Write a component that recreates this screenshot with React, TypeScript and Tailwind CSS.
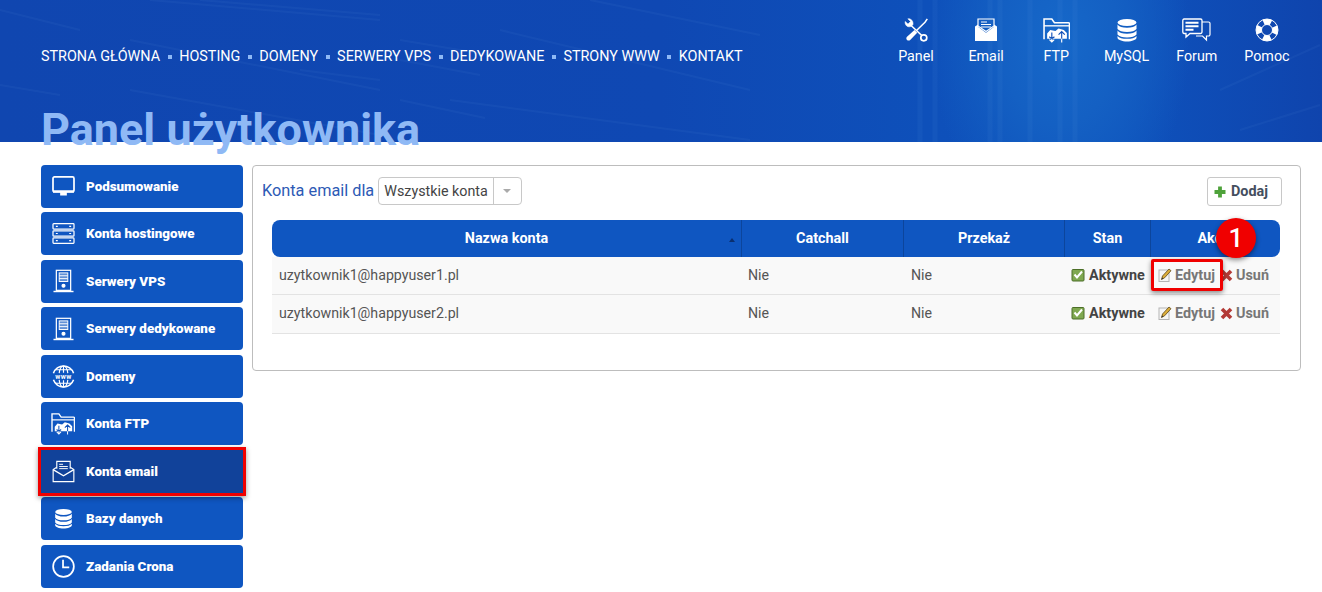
import type { ReactNode } from "react";

const ROBOTO = "font-['Roboto','Liberation_Sans',sans-serif]";

type IconProps = { className?: string };

// ikony rysowane recznie
const ToolsIcon = ({ className }: IconProps) => (
  <svg viewBox="0 0 24 24" className={className} fill="none" stroke="currentColor">
    <path d="M6 6.500l11.800 11" strokeWidth="1.500" />
    <circle cx="19.800" cy="19.800" r="3" strokeWidth="1.700" />
    <path d="M3.800.8l2.700 2.700L4 6 1.200 3.400C.6 6 2.500 9 5.500 8.800l2-.5L9 6.500C9.500 3 7 .3 3.800.8z" fill="currentColor" stroke="currentColor" strokeWidth=".5" />
    <path d="M23.300.8l-2.300 3.400-8.500 8.300" strokeWidth="1.500" />
    <path d="M10.500 12l2.700 2.700-7 7.200c-.9.900-2.300.9-3.200 0s-.9-2.300 0-3.200z" fill="currentColor" stroke="none" />
  </svg>
);

const EmailFilledIcon = ({ className }: IconProps) => (
  <svg viewBox="0 0 24 24" className={className} fill="currentColor">
    <path d="M4 8V1h16v7l-8 5.500z" fill="none" stroke="currentColor" strokeWidth="1.200" />
    <path d="M7 4h6M7 6.500h10M7 9h10" stroke="currentColor" strokeWidth="1" />
    <path d="M1 8.500l3-2v2.200l8 6 8-6V6.500l3 2V23H1z" />
  </svg>
);

const EmailOutlineIcon = ({ className }: IconProps) => (
  <svg viewBox="0 0 24 24" className={className} fill="none" stroke="currentColor" strokeWidth="1.200">
    <path d="M5 9V1.500h14V9" />
    <path d="M7.500 4.500h4M7.500 6.800h9M7.500 9h9" strokeWidth="1" />
    <path d="M5 7.500L1.200 10v12.500h21.600V10L19 7.500" />
    <path d="M1.200 10L12 16.500 22.800 10" strokeWidth="1.400" />
  </svg>
);

const FtpIcon = ({ className }: IconProps) => (
  <svg viewBox="0 0 26 24" className={className} fill="none" stroke="currentColor">
    <path d="M1 20.500V1h7.500L11 4.500h13.500a1 1 0 0 1 1 1v15" strokeWidth="1.500" />
    <path d="M1 7.500h24.500" strokeWidth="1.300" />
    <path d="M4 20v-5l3-3.500 5 1 3-2.500 5 1.500 3 3V20z" fill="currentColor" stroke="none" />
    <g strokeWidth="1.100" stroke="#1050b8">
      <path d="M8.500 14v6M18 20v-7M15 16l3-3 3 3M6 18l2.500 2 2.500-2" />
    </g>
    <g strokeWidth="1.100" stroke="currentColor">
      <path d="M8.500 20v3M18 20v3.500M6.200 20.700l2.300 2.300 2.300-2.300" />
    </g>
  </svg>
);

const DatabaseIcon = ({ className }: IconProps) => (
  <svg viewBox="0 0 24 24" className={className} fill="currentColor">
    <ellipse cx="12" cy="4.500" rx="9.500" ry="3.500" />
    <path d="M2.500 6.500c1.500 2.200 5 3.200 9.500 3.200s8-1 9.500-3.200V11c-1.500 2-5 3-9.500 3s-8-1-9.500-3z" />
    <path d="M2.500 12.500c1.500 2.200 5 3.200 9.500 3.200s8-1 9.500-3.200V16.500c-1.500 2-5 3-9.500 3s-8-1-9.500-3z" />
    <path d="M2.500 18c1.500 2 5 2.800 9.500 2.800s8-.8 9.500-2.800v1.800c0 2-4.500 3.700-9.500 3.700s-9.500-1.700-9.500-3.700z" />
  </svg>
);

const ForumIcon = ({ className }: IconProps) => (
  <svg viewBox="0 0 29 24" className={className} fill="none" stroke="currentColor">
    <path d="M20 4h6.500a1.500 1.500 0 0 1 1.500 1.500v11a1.500 1.500 0 0 1-1.500 1.500h-2v4l-4-4H14" strokeWidth="1.200" />
    <path d="M2 1h16.500A1.500 1.500 0 0 1 20 2.500v11.500a1.500 1.500 0 0 1-1.500 1.500H8l-4 3.500v-3.500H2A1.500 1.500 0 0 1 .8 14V2.500A1.500 1.500 0 0 1 2 1z" strokeWidth="1.300" />
    <path d="M3.500 4.800h13M3.500 8.300h13M3.500 11.800h8" strokeWidth="2" />
  </svg>
);

const LifeRingIcon = ({ className }: IconProps) => (
  <svg viewBox="0 0 24 24" className={className} fill="none" stroke="currentColor">
    <circle cx="12" cy="12" r="8.200" strokeWidth="5.500" strokeDasharray="7.500 5.380" strokeDashoffset="3.700" />
    <circle cx="12" cy="12" r="11" strokeWidth="1" />
    <circle cx="12" cy="12" r="5.500" strokeWidth="1" />
  </svg>
);

const MonitorIcon = ({ className }: IconProps) => (
  <svg viewBox="0 0 24 22" className={className} fill="none" stroke="currentColor">
    <rect x="1" y="1" width="22" height="15.500" rx="1.500" strokeWidth="1.800" />
    <path d="M1 15h22v2.500H1zM8.500 17.500h7v3h-7z" fill="currentColor" stroke="none" />
  </svg>
);

const ServersIcon = ({ className }: IconProps) => (
  <svg viewBox="0 0 24 22" className={className} fill="none" stroke="currentColor" strokeWidth="1.300">
    <rect x="1" y=".7" width="22" height="5.600" rx=".8" />
    <rect x="1" y="8.200" width="22" height="5.600" rx=".8" />
    <rect x="1" y="15.700" width="22" height="5.600" rx=".8" />
    <path d="M4 3.500h2M18 3.500h2M4 11h2M18 11h2M4 18.500h2M18 18.500h2" strokeWidth="1.200" />
  </svg>
);

const TowerIcon = ({ className }: IconProps) => (
  <svg viewBox="0 0 22 24" className={className} fill="none" stroke="currentColor" strokeWidth="1.300">
    <rect x="3.500" y=".8" width="15" height="21" />
    <rect x="6.500" y="3.500" width="9" height="9" fill="currentColor" fillOpacity=".35" strokeWidth="1" />
    <path d="M6.500 6.500h9M6.500 9.500h9" strokeWidth="1" />
    <circle cx="11" cy="17" r="1.500" fill="currentColor" />
    <path d="M.5 23h21" strokeWidth="1.500" />
  </svg>
);

const GlobeIcon = ({ className }: IconProps) => (
  <svg viewBox="0 0 24 24" className={className} fill="none" stroke="currentColor" strokeWidth="1.600">
    <path d="M1.500 8.500C3 4 7.500 1 12 1s9 3 10.500 7.500" />
    <path d="M1.500 15.500C3 20 7.500 23 12 23s9-3 10.500-7.500" />
    <path d="M7.500 8.500C8 4 10 1 12 1s4 3 4.500 7.500M7.500 15.500C8 20 10 23 12 23s4-3 4.500-7.500M3.500 5h17M3.500 19h17M12 1v7M12 16v7" strokeWidth="1.200" />
    <text x="12" y="14.600" textAnchor="middle" fontSize="7.200" fontWeight="700" letterSpacing=".5" fill="currentColor" stroke="none" fontFamily="Roboto, sans-serif">www</text>
  </svg>
);

const ClockIcon = ({ className }: IconProps) => (
  <svg viewBox="0 0 24 24" className={className} fill="none" stroke="currentColor" strokeWidth="1.800">
    <circle cx="12" cy="12" r="10.800" />
    <path d="M11.500 5v7.800h6.500" />
  </svg>
);

const CheckIcon = () => (
  <svg viewBox="0 0 14 14" className="w-[14px] h-[14px] shrink-0">
    <rect x="1" y="1.500" width="12" height="11.500" rx="1" fill="#7fa850" stroke="#4c6f28" />
    <path d="M3.500 6.500l2.500 3 5-6" fill="none" stroke="#fff" strokeWidth="2" />
  </svg>
);

const EditIcon = () => (
  <svg viewBox="0 0 14 14" className="w-[14px] h-[14px] shrink-0">
    <rect x="1" y="2" width="10" height="11.500" fill="#f6f6f6" stroke="#b5b5b5" />
    <path d="M3.500 11.500l1-3.500 6.500-7 2 1.700-6.300 7z" fill="#dcae3a" stroke="#5f4716" strokeWidth=".8" />
    <path d="M3.500 11.500l.6-2 1.400 1.100z" fill="#333" />
  </svg>
);

const CrossIcon = () => (
  <svg viewBox="0 0 13 13" className="w-[13px] h-[13px] shrink-0">
    <path d="M2 2l9 9M11 2l-9 9" stroke="#b33a36" strokeWidth="3.600" />
  </svg>
);

const PlusIcon = () => (
  <svg viewBox="0 0 12 12" className="w-[12px] h-[12px] shrink-0">
    <path d="M6 .5v11M.5 6h11" stroke="#4ea23a" strokeWidth="3.800" />
  </svg>
);

const navLinks = ["Strona główna", "Hosting", "Domeny", "Serwery VPS", "Dedykowane", "Strony WWW", "Kontakt"];

const quickLinks = [
  { label: "Panel", icon: <ToolsIcon className="w-[24px] h-[24px]" /> },
  { label: "Email", icon: <EmailFilledIcon className="w-[24px] h-[24px]" /> },
  { label: "FTP", icon: <FtpIcon className="w-[27px] h-[25px]" /> },
  { label: "MySQL", icon: <DatabaseIcon className="w-[24px] h-[24px]" /> },
  { label: "Forum", icon: <ForumIcon className="w-[29px] h-[24px]" /> },
  { label: "Pomoc", icon: <LifeRingIcon className="w-[24px] h-[24px]" /> },
];

const menu: { label: string; icon: ReactNode; active?: boolean }[] = [
  { label: "Podsumowanie", icon: <MonitorIcon className="w-[23px] h-[21px]" /> },
  { label: "Konta hostingowe", icon: <ServersIcon className="w-[23px] h-[21px]" /> },
  { label: "Serwery VPS", icon: <TowerIcon className="w-[21px] h-[24px]" /> },
  { label: "Serwery dedykowane", icon: <TowerIcon className="w-[21px] h-[24px]" /> },
  { label: "Domeny", icon: <GlobeIcon className="w-[23px] h-[23px]" /> },
  { label: "Konta FTP", icon: <FtpIcon className="w-[24px] h-[22px]" /> },
  { label: "Konta email", icon: <EmailOutlineIcon className="w-[23px] h-[23px]" />, active: true },
  { label: "Bazy danych", icon: <DatabaseIcon className="w-[21px] h-[21px]" /> },
  { label: "Zadania Crona", icon: <ClockIcon className="w-[23px] h-[23px]" /> },
];

const accounts = ["uzytkownik1@happyuser1.pl", "uzytkownik1@happyuser2.pl"];

const TABLE_COLS = "grid grid-cols-[470px_162px_161px_86px_129px]";

const App = () => {
  return (
    <div className={`${ROBOTO} w-[1322px] h-[592px] overflow-hidden bg-white relative`}>
      {/* naglowek */}
      <header className="relative h-[142px] bg-[#0f47b2] bg-[radial-gradient(ellipse_130px_190px_at_1060px_40px,#1668c9_0%,#1460c3_45%,transparent_100%),linear-gradient(90deg,#1046b0_0%,#0f48b3_50%,#0e50ba_70%,#0e52bc_85%,#0f44ad_100%)] text-white">
        <svg className="absolute inset-0 w-full h-full opacity-[0.06]" viewBox="0 0 1322 142" fill="none" stroke="#7db0ee" strokeWidth="2">
          <path d="M0 10l80 20M150 0l230 20M200 0l180 15M300 70l80 10M0 85l60 10M130 40l250 50M130 90l250 45M400 40l90 15M400 60l80 15M400 100l85 18M590 0l170 35M500 30l250 60M450 100l300 40" />
          <path d="M1060 0v142M1075 0v142M990 0v142M1000 0v142M1030 0v142M920 0v142M935 0v142" strokeWidth="5" />
          <path d="M1220 90l100-45M1240 130l80-25" />
        </svg>
        <div className="relative pl-[41px] pr-[20px] pt-[17px] flex items-start justify-between">
          <nav className="flex items-center mt-[29px] h-[22px] text-[14.38px] uppercase leading-none">
            {navLinks.map((link, i) => (
              <div key={link} className="flex items-center">
                {i > 0 && <span className="w-[4px] h-[4px] mx-[7.5px] bg-[#8fb9f5]" />}
                <a>{link}</a>
              </div>
            ))}
          </nav>
          <div className="flex">
            {quickLinks.map((item) => (
              <div key={item.label} className="w-[70.2px] h-[48px] flex flex-col items-center justify-between text-[14.3px] leading-[18px]">
                <div className="h-[26px] flex items-center justify-center">{item.icon}</div>
                <span>{item.label}</span>
              </div>
            ))}
          </div>
        </div>
        <h1 className="relative pl-[41px] mt-[36px] text-[45px] leading-[52px] font-bold text-[#8fb9f5]">Panel użytkownika</h1>
      </header>

      <div className="flex items-start pl-[41px] pt-[23px]">
        {/* menu boczne */}
        <aside className="w-[202px] -mt-[0.1px] flex flex-col gap-[4.5px]">
          {menu.map((item) => (
            <a
              key={item.label}
              className={`h-[43px] pl-[10px] flex items-center text-white text-[13.4px] font-black ${
                item.active
                  ? "bg-[#11429a] outline-[3px] outline-[#f00000] shadow-[0_2px_5px_3px_rgba(0,0,0,0.4)] relative"
                  : "bg-[#0f56c1] rounded-[4px]"
              }`}
            >
              <span className="w-[24px] flex justify-center mr-[11px]">{item.icon}</span>
              <span className="pt-[1px]">{item.label}</span>
            </a>
          ))}
        </aside>

        {/* panel */}
        <main className="ml-[9px] w-[1049px] h-[206px] border border-[#bdbdbd] rounded-[4px] pl-[9px] pr-[18px] pt-[11px]">
          <div className="flex items-start justify-between">
            <div className="flex items-center">
              <span className="text-[16.3px] text-[#2d5ab5]">Konta email dla</span>
              <div className="ml-[4px] h-[28px] flex border border-[#c8c8c8] rounded-[4px] text-[14.3px] text-[#444]">
                <span className="px-[5px] leading-[27px]">Wszystkie konta</span>
                <span className="w-[28px] border-l border-[#c8c8c8] flex items-center justify-center">
                  <span className="w-0 h-0 border-x-[4px] border-x-transparent border-t-[4px] border-t-[#aaa]" />
                </span>
              </div>
            </div>
            <button className="h-[29px] w-[75px] pl-[6px] flex items-center gap-[5px] border border-[#c8c8c8] rounded-[3px] text-[14.4px] font-bold text-[#444e5e]">
              <PlusIcon />
              Dodaj
            </button>
          </div>

          <div className="ml-[10px] mt-[14px] w-[1008px] text-[14.2px]">
            <div className={`${TABLE_COLS} h-[37px] rounded-[8px] bg-[#0f56c1] text-white text-[14.4px] font-bold`}>
              <div className="relative flex items-center justify-center border-r border-[#0c459c]">
                Nazwa konta
                <span className="absolute right-[6px] top-[18px] w-0 h-0 border-x-[3px] border-x-transparent border-b-[4px] border-b-[#0a2f70]" />
              </div>
              <div className="flex items-center justify-center border-r border-[#0c459c]">Catchall</div>
              <div className="flex items-center justify-center border-r border-[#0c459c]">Przekaż</div>
              <div className="flex items-center justify-center border-r border-[#0c459c]">Stan</div>
              <div className="flex items-center justify-center">Akcje</div>
            </div>
            {accounts.map((account, i) => (
              <div
                key={account}
                className={`${TABLE_COLS} items-center bg-[#f9f9f9] border-b border-[#e3e3e3] text-[#555] ${
                  i === 0 ? "h-[38px]" : "h-[39px] pb-[1px]"
                }`}
              >
                <div className="pl-[7px]">{account}</div>
                <div className="pl-[6px]">Nie</div>
                <div className="pl-[7px]">Nie</div>
                <div className="flex items-center gap-[4px] pl-[6px] text-[14.4px] font-bold text-[#444]">
                  <CheckIcon />
                  Aktywne
                </div>
                <div className="flex items-center pl-[7px] text-[14.4px] font-bold text-[#777]">
                  <span className="flex items-center gap-[3px]">
                    <EditIcon />
                    Edytuj
                  </span>
                  <span className="flex items-center gap-[3px] ml-[5px]">
                    <CrossIcon />
                    Usuń
                  </span>
                </div>
              </div>
            ))}
          </div>
        </main>
      </div>

      {/* adnotacje na zrzucie */}
      <div className="absolute left-[1151px] top-[259px] w-[72px] h-[32px] border-[3px] border-[#f00000] rounded-[2px] shadow-[0_2px_5px_rgba(0,0,0,0.45)]" />
      <div className="absolute left-[1216px] top-[218px] w-[40px] h-[40px] rounded-full bg-[#f00000] shadow-[0_2px_5px_rgba(0,0,0,0.45)] flex items-center justify-center text-white text-[26px] font-medium">
        1
      </div>
    </div>
  );
};

export default App;
